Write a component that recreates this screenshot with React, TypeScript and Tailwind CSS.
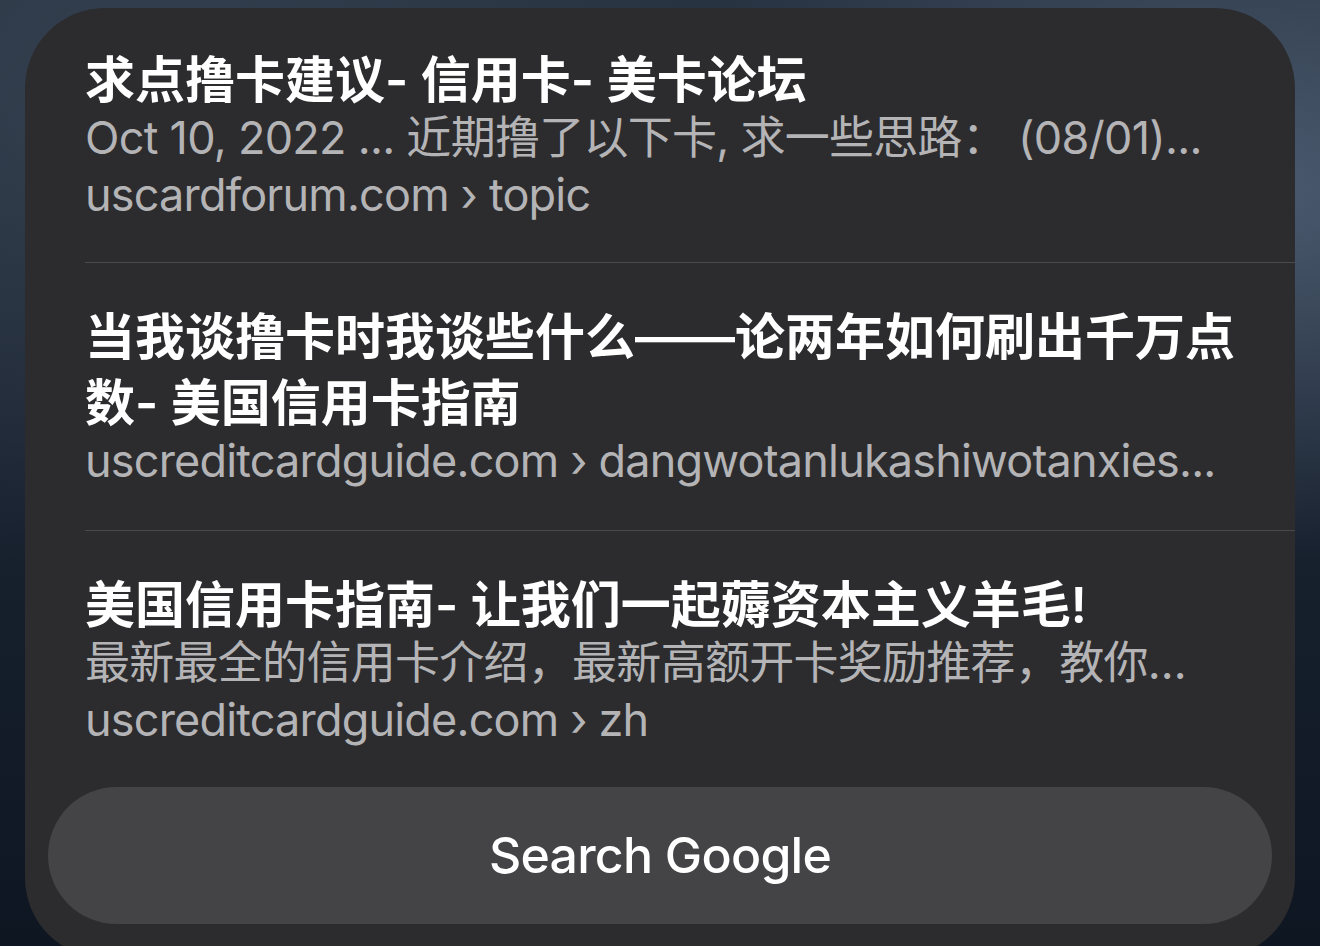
import React from "react";

type Item = {
  title: string[];
  snippet?: string;
  url: string;
};

const items: Item[] = [
  {
    title: ["求点撸卡建议- 信用卡- 美卡论坛"],
    snippet: "Oct 10, 2022 ... 近期撸了以下卡, 求一些思路： (08/01)...",
    url: "uscardforum.com › topic",
  },
  {
    title: ["当我谈撸卡时我谈些什么——论两年如何刷出千万点", "数- 美国信用卡指南"],
    url: "uscreditcardguide.com › dangwotanlukashiwotanxies...",
  },
  {
    title: ["美国信用卡指南- 让我们一起薅资本主义羊毛!"],
    snippet: "最新最全的信用卡介绍，最新高额开卡奖励推荐，教你…",
    url: "uscreditcardguide.com › zh",
  },
];

function Result({ item, first, last }: { item: Item; first: boolean; last: boolean }) {
  return (
    <div
      className={
        (first ? "pt-[39px] pb-[39px] " : last ? "pt-[41px] " : "pt-[41px] pb-[41px] ") +
        (last ? "" : "border-b border-[#4a4a4c]")
      }
    >
      <div className="pr-[60px]">
        {item.title.map((t, i) => (
          <div
            key={i}
            className="whitespace-nowrap text-[50px] leading-[66px] font-semibold text-white"
          >
            {t}
          </div>
        ))}
        <div className="-mt-[4px]">
          {item.snippet && (
            <div className="whitespace-nowrap overflow-hidden text-[45px] leading-[57px] tracking-[-0.016em] text-[#b4b4b6]">
              {item.snippet}
            </div>
          )}
          <div className="whitespace-nowrap overflow-hidden text-[45px] leading-[57px] tracking-[-0.018em] text-[#b4b4b6]">
            {item.url}
          </div>
        </div>
      </div>
    </div>
  );
}

export default function App() {
  return (
    <div className="h-[946px] w-[1320px] overflow-hidden font-['Inter','Noto_Sans_CJK_SC',sans-serif] bg-[radial-gradient(ellipse_at_95%_20%,#4a5a6e_0%,transparent_35%),radial-gradient(ellipse_at_10%_10%,#34404f_0%,transparent_40%),linear-gradient(180deg,#263140_0%,#1a2331_45%,#0e1622_100%)]">
      <div className="pt-[8px] px-[25px]">
        <div className="h-[950px] rounded-[80px] bg-[#2c2c2e] flex flex-col">
          <div className="pl-[60px]">
            {items.map((it, i) => (
              <Result key={i} item={it} first={i === 0} last={i === items.length - 1} />
            ))}
          </div>
          <div className="px-[23px] pt-[39px]">
            <div className="h-[137px] rounded-full bg-[#444446] flex items-center justify-center">
              <span className="text-[50px] font-medium text-white tracking-[-0.015em]">Search Google</span>
            </div>
          </div>
        </div>
      </div>
    </div>
  );
}
